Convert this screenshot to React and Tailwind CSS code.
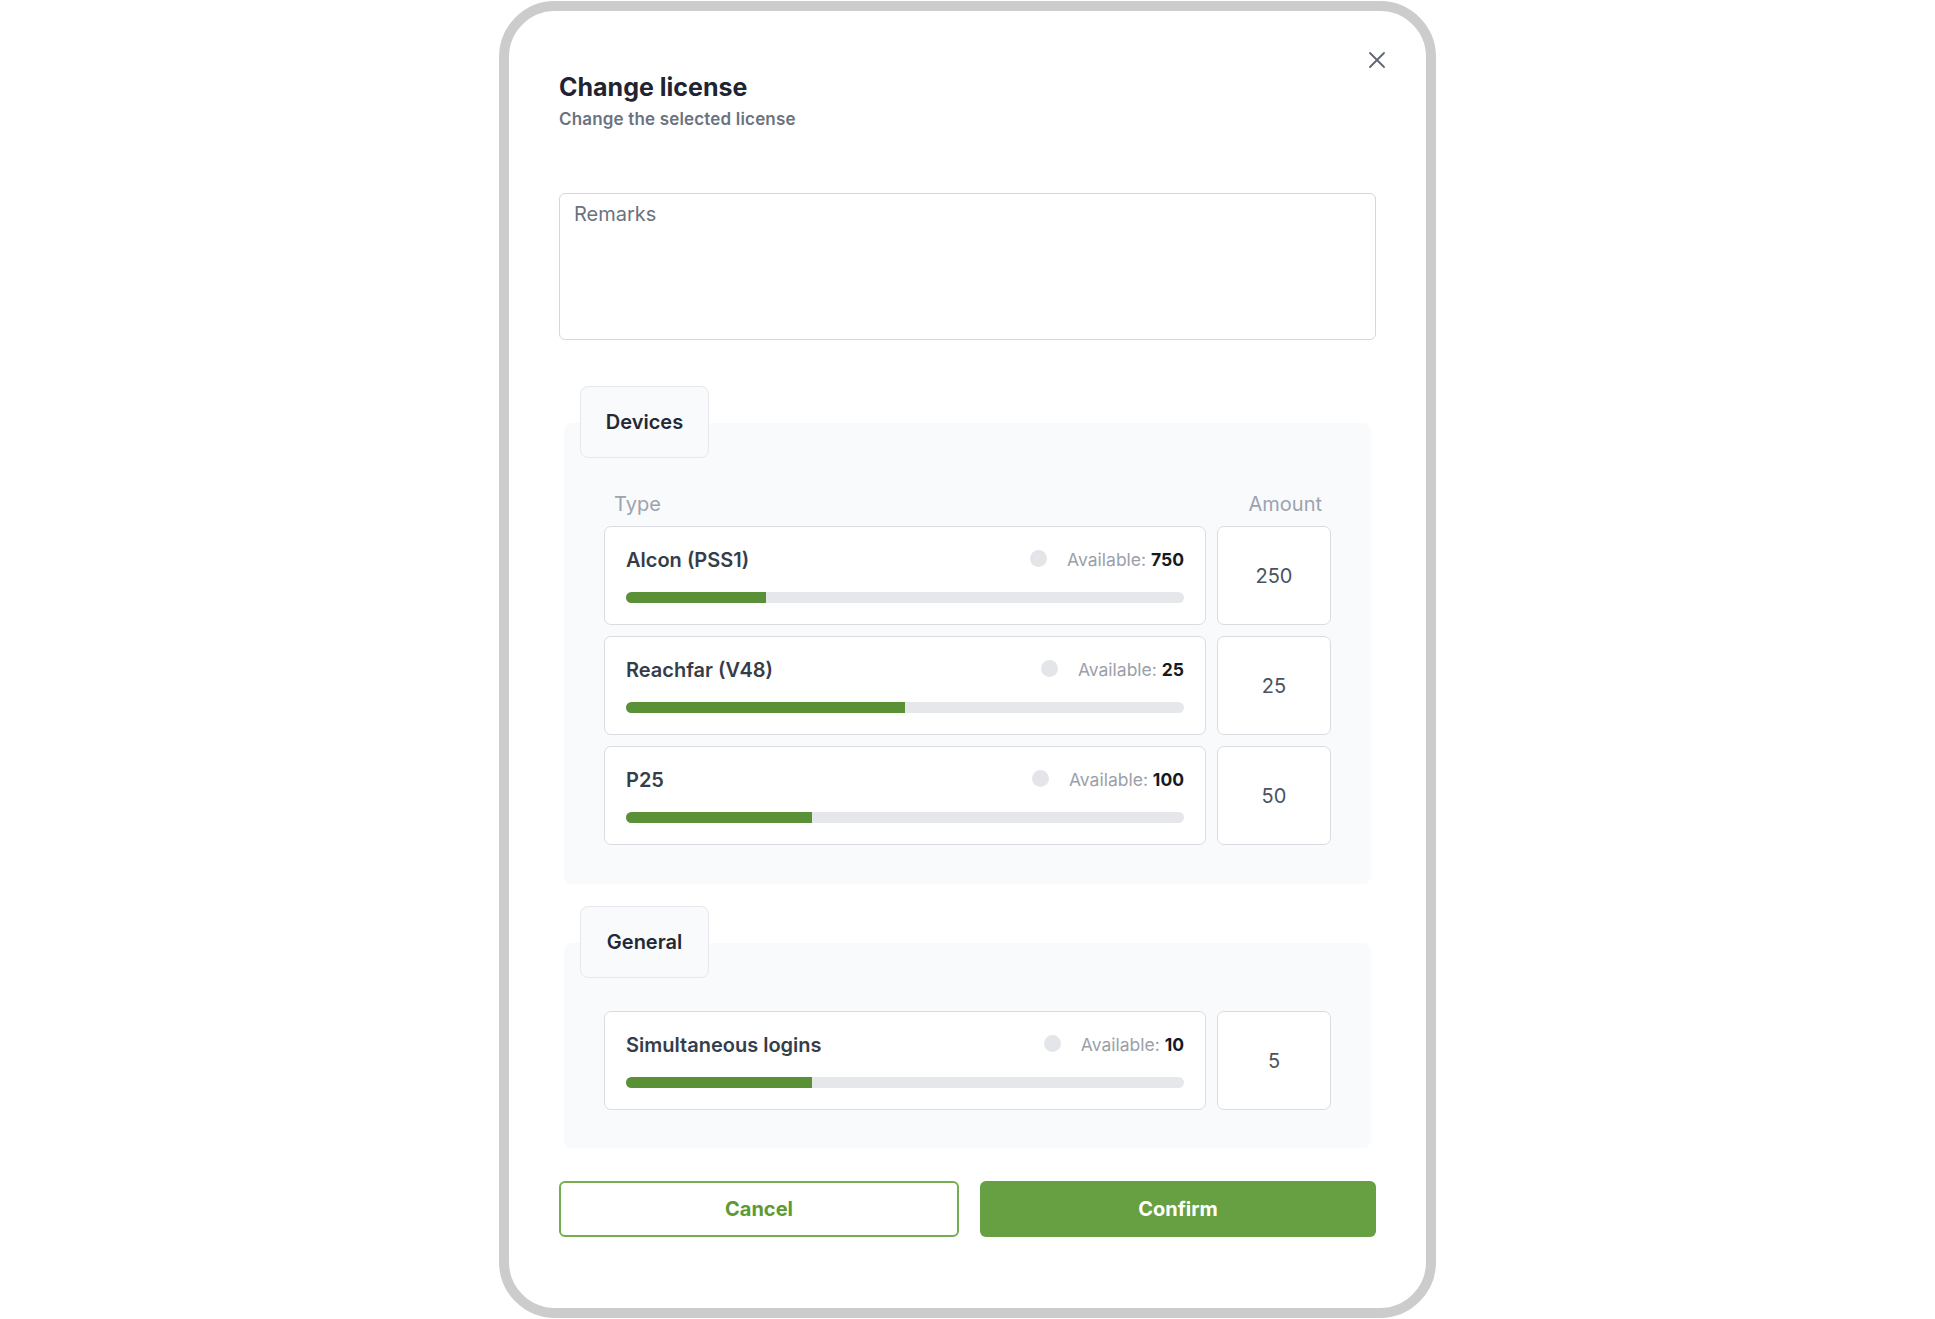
import { useState } from "react";

const devices = [
  { name: "Alcon (PSS1)", available: 750, amount: 250 },
  { name: "Reachfar (V48)", available: 25, amount: 25 },
  { name: "P25", available: 100, amount: 50 },
];

const general = [{ name: "Simultaneous logins", available: 10, amount: 5 }];

function LicenseRow({ item }) {
  const pct = (item.amount / (item.amount + item.available)) * 100;
  return (
    <div className="flex gap-[11px]">
      <div className="flex-1 bg-white border border-[#d9dce1] rounded-[7px] px-[21px] pt-[19px] pb-[21px]">
        <div className="flex items-center h-7">
          <span className="text-[20px] leading-7 font-semibold text-[#363d4a]">{item.name}</span>
          <span className="ml-auto w-[17px] h-[17px] rounded-full bg-[#e3e5e8] -mt-[3px]" />
          <span className="ml-[20px] text-[17.5px] leading-7 text-[#9aa0aa]">
            Available: <span className="font-bold text-[#151a23]">{item.available}</span>
          </span>
        </div>
        <div className="mt-[18px] h-[11px] rounded-full bg-[#e5e7eb] overflow-hidden">
          <div className="h-full bg-[#5a9136]" style={{ width: pct + "%" }} />
        </div>
      </div>
      <div className="w-[114px] bg-white border border-[#d9dce1] rounded-[7px] flex items-center justify-center text-[20px] text-[#4b5260]">
        {item.amount}
      </div>
    </div>
  );
}

function Section({ title, children, pt }) {
  return (
    <div>
      <div className="relative z-10 ml-[21px] w-[129px] h-[72px] rounded-lg border border-[#e6e8eb] bg-[#f9fafb] flex items-center justify-center text-[20px] font-semibold text-[#222935]">
        {title}
      </div>
      <div className={"-mt-[35px] mx-[5px] rounded-lg bg-[#f9fafb] px-10 " + pt}>{children}</div>
    </div>
  );
}

export default function App() {
  const [remarks, setRemarks] = useState("");
  return (
    <div className="w-full h-[1319px] bg-white flex justify-center" style={{ fontFamily: "Inter, 'Noto Sans', sans-serif" }}>
      <div className="relative mt-px w-[937px] h-[1317px] border-[10px] border-[#cccccc] rounded-[56px] bg-white px-[50px] pt-[60px]">
        <button className="absolute right-[40px] top-[40px] text-[#5f6673]">
          <svg width="18" height="18" viewBox="0 0 18 18" fill="none" stroke="currentColor" strokeWidth="1.8" strokeLinecap="round">
            <path d="M2 2l14 14M16 2L2 16" />
          </svg>
        </button>
        <h1 className="text-[25px] leading-8 font-bold text-[#1e2431]">Change license</h1>
        <p className="mt-1 text-[17px] leading-6 font-semibold text-[#6b7280] tracking-[0.01em]">Change the selected license</p>
        <textarea
          value={remarks}
          onChange={(e) => setRemarks(e.target.value)}
          placeholder="Remarks"
          className="mt-[62px] block w-full h-[147px] resize-none rounded-md border border-[#d4d7dc] px-[14px] py-[5px] text-[20px] text-[#374151] placeholder:text-[#6b7280] outline-none"
        />
        <div className="mt-[46px]">
          <Section title="Devices" pt="pt-[67px] pb-[39px]">
            <div className="flex justify-between text-[20px] leading-7 text-[#9ca3af] pl-[10px] pr-[9px] mb-2">
              <span>Type</span>
              <span>Amount</span>
            </div>
            <div className="flex flex-col gap-[11px]">
              {devices.map((d) => (
                <LicenseRow key={d.name} item={d} />
              ))}
            </div>
          </Section>
        </div>
        <div className="mt-[22px]">
          <Section title="General" pt="pt-[68px] pb-[38px]">
            {general.map((d) => (
              <LicenseRow key={d.name} item={d} />
            ))}
          </Section>
        </div>
        <div className="mt-[33px] flex gap-[21px]">
          <button className="flex-1 h-14 rounded-md border-2 border-[#74ad52] bg-white text-[20px] font-bold text-[#5c9a36]">
            Cancel
          </button>
          <button className="flex-1 h-14 rounded-md bg-[#66a042] text-[20px] font-bold text-white">Confirm</button>
        </div>
      </div>
    </div>
  );
}
